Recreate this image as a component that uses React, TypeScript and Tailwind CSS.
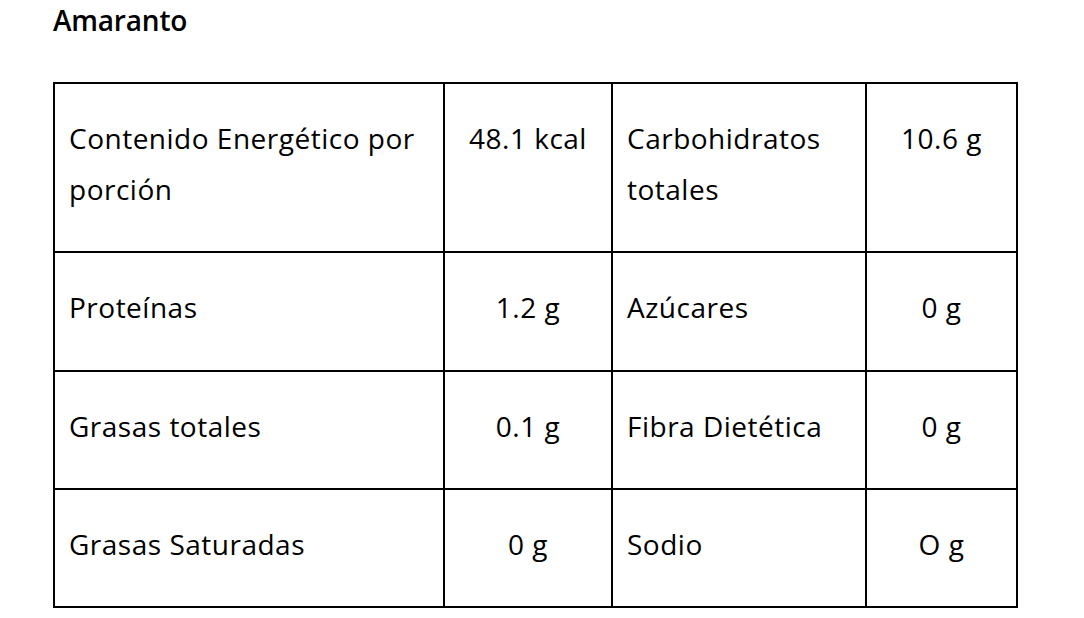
const rows: { label: string; value: string; label2: string; value2: string; h: string }[] = [
  { label: "Contenido Energético por porción", value: "48.1 kcal", label2: "Carbohidratos totales", value2: "10.6 g", h: "h-[169px]" },
  { label: "Proteínas", value: "1.2 g", label2: "Azúcares", value2: "0 g", h: "h-[119px]" },
  { label: "Grasas totales", value: "0.1 g", label2: "Fibra Dietética", value2: "0 g", h: "h-[118px]" },
  { label: "Grasas Saturadas", value: "0 g", label2: "Sodio", value2: "O g", h: "h-[118px]" },
];

export default function App() {
  return (
    <div className="min-h-screen bg-white pl-[53px] pt-[2px] text-black font-['Open_Sans',sans-serif]">
      <h1 className="text-[28px] leading-[36px] font-semibold tracking-[-0.2px]">Amaranto</h1>
      <table className="mt-[44px] w-[963px] table-fixed border-collapse border-2 border-black text-[28px] leading-[51px] tracking-[0.5px]">
        <colgroup>
          <col className="w-[390px]" />
          <col className="w-[168px]" />
          <col className="w-[254px]" />
          <col className="w-[151px]" />
        </colgroup>
        <tbody>
          {rows.map((r) => (
            <tr key={r.label} className={r.h}>
              <td className="border-2 border-black px-[14px] pt-[29px] align-top">{r.label}</td>
              <td className="border-2 border-black px-[4px] pt-[29px] align-top text-center">{r.value}</td>
              <td className="border-2 border-black px-[14px] pt-[29px] align-top">{r.label2}</td>
              <td className="border-2 border-black px-[4px] pt-[29px] align-top text-center">{r.value2}</td>
            </tr>
          ))}
        </tbody>
      </table>
    </div>
  );
}
